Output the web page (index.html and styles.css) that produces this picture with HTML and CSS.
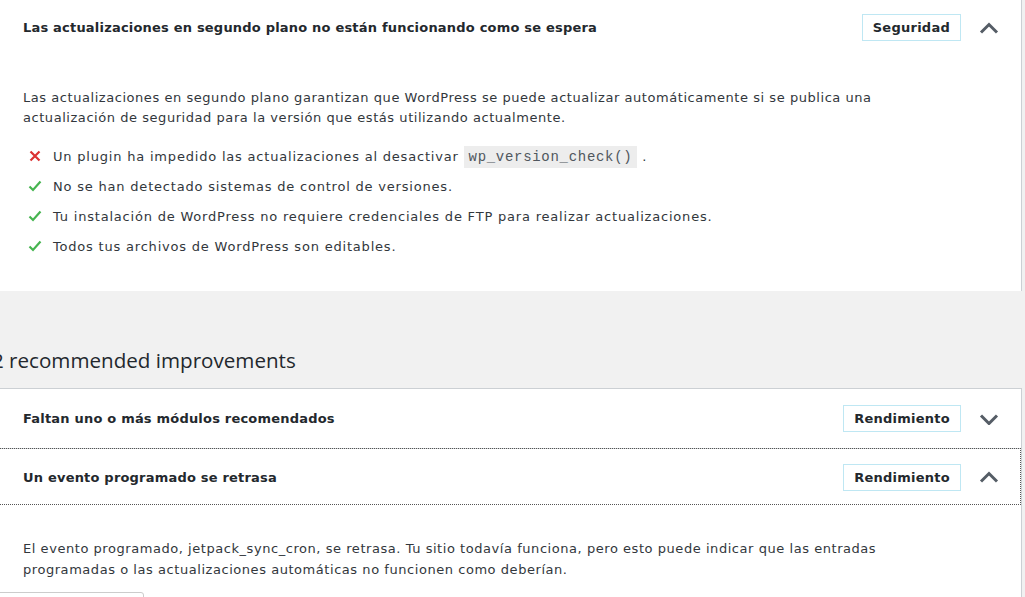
FILE: index.html
```html
<!DOCTYPE html>
<html lang="es">
<head>
    <meta charset="UTF-8">
    <meta name="viewport" content="width=device-width, initial-scale=1.0">
    <title>Salud del sitio</title>
    <link rel="stylesheet" href="styles.css">
</head>
<body>
    <div class="wrap">
        <!-- critical issue, expanded -->
        <div class="panel first">
            <div class="row">
                <span class="title">Las actualizaciones en segundo plano no están funcionando como se espera</span>
                <span class="badge">Seguridad</span>
                <svg class="chevron" width="20" height="12" viewBox="0 0 20 12"><path d="M2 10.5 L10 2.5 L18 10.5" /></svg>
            </div>
            <div class="content">
                <p>Las actualizaciones en segundo plano garantizan que WordPress se puede actualizar automáticamente si se publica una actualización de seguridad para la versión que estás utilizando actualmente.</p>
                <ul class="checks">
                    <li><svg class="icon bad" width="14" height="14" viewBox="0 0 14 14"><path d="M2.5 2.5 L11.5 11.5 M11.5 2.5 L2.5 11.5" /></svg>Un plugin ha impedido las actualizaciones al desactivar <code>wp_version_check()</code> .</li>
                    <li><svg class="icon good" width="14" height="14" viewBox="0 0 14 14"><path d="M1.5 7.5 L5 11 L12.5 2.5" /></svg>No se han detectado sistemas de control de versiones.</li>
                    <li><svg class="icon good" width="14" height="14" viewBox="0 0 14 14"><path d="M1.5 7.5 L5 11 L12.5 2.5" /></svg>Tu instalación de WordPress no requiere credenciales de FTP para realizar actualizaciones.</li>
                    <li><svg class="icon good" width="14" height="14" viewBox="0 0 14 14"><path d="M1.5 7.5 L5 11 L12.5 2.5" /></svg>Todos tus archivos de WordPress son editables.</li>
                </ul>
            </div>
        </div>

        <h3 class="section-title">2 recommended improvements</h3>

        <div class="panel">
            <div class="row">
                <span class="title">Faltan uno o más módulos recomendados</span>
                <span class="badge">Rendimiento</span>
                <svg class="chevron" width="20" height="12" viewBox="0 0 20 12"><path d="M2 2.5 L10 10.5 L18 2.5" /></svg>
            </div>
            <div class="row focus">
                <span class="title">Un evento programado se retrasa</span>
                <span class="badge">Rendimiento</span>
                <svg class="chevron" width="20" height="12" viewBox="0 0 20 12"><path d="M2 10.5 L10 2.5 L18 10.5" /></svg>
            </div>
            <div class="content second">
                <p>El evento programado, jetpack_sync_cron, se retrasa. Tu sitio todavía funciona, pero esto puede indicar que las entradas programadas o las actualizaciones automáticas no funcionen como deberían.</p>
                <span class="action"></span>
            </div>
        </div>
    </div>
</body>
</html>
```

FILE: styles.css
```css
body {
    margin: 0;
    background-color: #f1f1f1;
    font-family: "DejaVu Sans", Verdana, sans-serif;
    font-size: 13px;
    color: #32373c;
    overflow: hidden;
}

.wrap {
    margin: -3px 3px 0 -8px;
}

.panel {
    background-color: #fff;
    border: 1px solid #ccd0d4;
}

.panel.first {
    border-bottom: none;
}

.row {
    display: flex;
    align-items: center;
    min-height: 59px;
    padding-left: 30px;
}

.row + .row {
    min-height: 56px;
    border-top: 1px solid #ccd0d4;
}

.row.focus {
    outline: 1px dotted #555;
    outline-offset: -1px;
}

.title {
    flex: 1;
    font-weight: 600;
    letter-spacing: 0.2px;
    color: #23282d;
}

.badge {
    border: 1px solid #bfe7f3;
    padding: 3px 10px 2px;
    font-weight: 600;
    letter-spacing: 0.25px;
    line-height: 20px;
    color: #23282d;
}

.chevron {
    margin: 0 22px 0 18px;
}

.chevron path {
    fill: none;
    stroke: #555d66;
    stroke-width: 3;
}

.content {
    padding: 31px 90px 29px 30px;
    letter-spacing: 0.8px;
}

.content p {
    margin: 0 0 14px;
    line-height: 20px;
    letter-spacing: 0.55px;
}

.content.second {
    padding-top: 33px;
}

.content.second p {
    line-height: 21px;
    margin-bottom: 12px;
}

.checks {
    list-style: none;
    margin: 0;
    padding: 0;
}

.checks li {
    padding: 5px 0;
    line-height: 20px;
}

.icon {
    vertical-align: -2px;
    margin: 0 11px 0 5px;
}

.icon path {
    fill: none;
    stroke-width: 2.2;
}

.icon.bad path {
    stroke: #dc3232;
}

.icon.good path {
    stroke: #46b450;
}

code {
    font-family: "Liberation Mono", monospace;
    font-size: 14px;
    letter-spacing: 0.7px;
    color: #50575e;
    background-color: rgba(0, 0, 0, 0.07);
    padding: 3px 5px 3px;
}

.section-title {
    font-family: "Open Sans", Arial, sans-serif;
    font-size: 20.6px;
    font-weight: normal;
    line-height: 28px;
    color: #23282d;
    margin: 55px 0 14px;
}

.action {
    display: inline-block;
    margin-left: -31px;
    width: 150px;
    height: 30px;
    border: 1px solid #ccc;
    border-radius: 3px;
    background-color: #fff;
}
```
